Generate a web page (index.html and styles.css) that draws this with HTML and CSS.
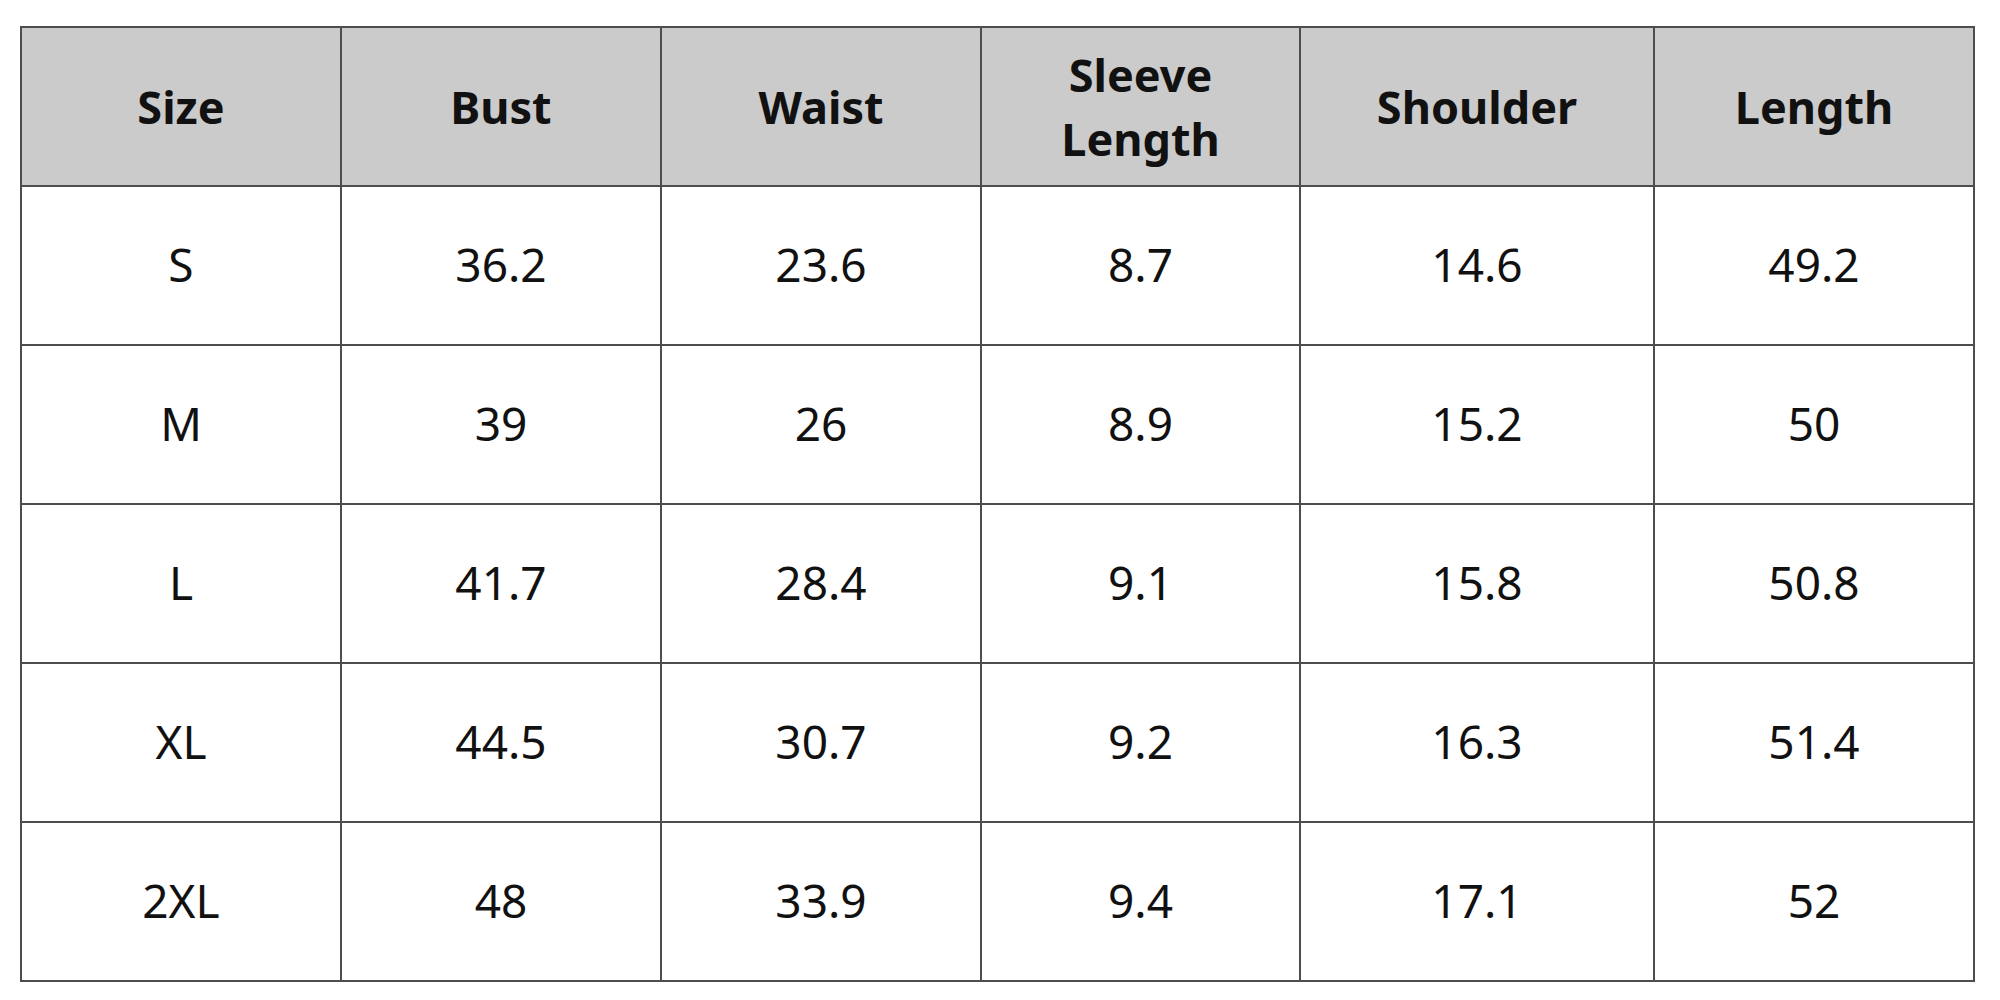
FILE: index.html
```html
<!DOCTYPE html>
<html lang="en">
<head>
<meta charset="utf-8">
<title>Size Chart</title>
<link rel="stylesheet" href="styles.css">
</head>
<body>
<div class="page">
<table class="chart">
  <colgroup>
    <col class="c-std"><col class="c-std"><col class="c-std"><col class="c-sleeve"><col class="c-wide"><col class="c-std">
  </colgroup>
  <thead>
    <tr><th>Size</th><th>Bust</th><th>Waist</th><th>Sleeve<br>Length</th><th>Shoulder</th><th>Length</th></tr>
  </thead>
  <tbody>
    <tr><td>S</td><td>36.2</td><td>23.6</td><td>8.7</td><td>14.6</td><td>49.2</td></tr>
    <tr><td>M</td><td>39</td><td>26</td><td>8.9</td><td>15.2</td><td>50</td></tr>
    <tr><td>L</td><td>41.7</td><td>28.4</td><td>9.1</td><td>15.8</td><td>50.8</td></tr>
    <tr><td>XL</td><td>44.5</td><td>30.7</td><td>9.2</td><td>16.3</td><td>51.4</td></tr>
    <tr><td>2XL</td><td>48</td><td>33.9</td><td>9.4</td><td>17.1</td><td>52</td></tr>
  </tbody>
</table>
</div>
</body>
</html>
```
FILE: styles.css
```css
html, body {
  margin: 0;
  padding: 0;
  background: #ffffff;
}
.page {
  padding: 26px 0 0 20px;
}
.chart {
  border-collapse: collapse;
  table-layout: fixed;
  width: 1953px;
  border: 2px solid #1a1a1a;
  font-family: "Noto Sans", "Open Sans", sans-serif;
  color: #111111;
}
.c-std { width: 320px; }
.c-sleeve { width: 319px; }
.c-wide { width: 354px; }
.chart th, .chart td {
  border: 2px solid #4d4d4d;
  text-align: center;
  vertical-align: middle;
  padding: 0;
}
.chart th {
  background: #cbcbcb;
  font-weight: 700;
  font-size: 45px;
  line-height: 64px;
  height: 157px;
}
.chart td {
  font-weight: 400;
  font-size: 46px;
  height: 153px;
  padding-bottom: 4px;
}
```
